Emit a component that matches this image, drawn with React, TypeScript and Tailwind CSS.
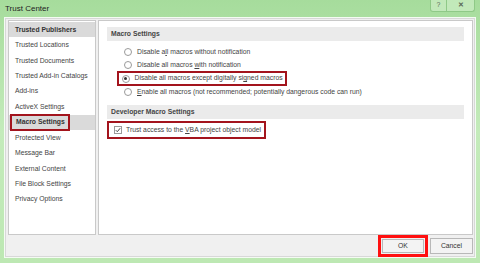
const font = { fontFamily: '"Liberation Sans", Arial, sans-serif' };

const navItems = [
  { label: 'Trusted Publishers', selected: true },
  { label: 'Trusted Locations' },
  { label: 'Trusted Documents' },
  { label: 'Trusted Add-in Catalogs' },
  { label: 'Add-ins' },
  { label: 'ActiveX Settings' },
  { label: 'Macro Settings', selected: true, marked: true },
  { label: 'Protected View' },
  { label: 'Message Bar' },
  { label: 'External Content' },
  { label: 'File Block Settings' },
  { label: 'Privacy Options' },
];

function Radio({ checked }: { checked?: boolean }) {
  return (
    <span className="w-[8px] h-[8px] rounded-full border border-[#9a9a9a] bg-white flex items-center justify-center shrink-0">
      {checked && <span className="w-[3px] h-[3px] rounded-full bg-[#333]" />}
    </span>
  );
}

function SectionHeader({ children }: { children: React.ReactNode }) {
  return (
    <div className="h-[14px] bg-[#ebebeb] flex items-center pl-[4px] font-bold text-[6.8px] text-[#444]">
      {children}
    </div>
  );
}

export default function App() {
  return (
    <div
      className="w-[480px] h-[263px] flex flex-col px-[4px] pb-[5px] bg-gradient-to-b from-[#a6dc9c] via-[#c4ebbb] to-[#bde8b3] overflow-hidden text-[#444]"
      style={font}
    >
      {/* title bar */}
      <div className="h-[17px] flex justify-between shrink-0">
        <span className="text-[8px] text-[#222] pl-[1px] pt-[3px]">Trust Center</span>
        <div className="flex h-[12px] mr-[1px] border border-t-0 border-[#8fc987] rounded-b-[3px] bg-[#cdeec6]/70">
          <span className="w-[16px] flex items-center justify-center text-[7px] text-[#5a6a58] border-r border-[#8fc987]">?</span>
          <span className="w-[27px] flex items-center justify-center text-[7px] font-bold text-[#5a6a58]">✕</span>
        </div>
      </div>

      {/* client area */}
      <div className="flex-1 flex flex-col bg-[#f0f0f0] border border-[#f4fbf3] shadow-[inset_0_0_0_1px_#d8d8d8]">
        <div className="flex gap-[2px] pt-[2px] pl-[3px] pr-[2px] h-[217px] shrink-0">
          {/* navigation */}
          <div className="w-[88px] bg-white border border-[#c9c9c9] pt-[1px] flex flex-col">
            {navItems.map((item) => (
              <div
                key={item.label}
                className={`h-[15.45px] flex items-center pl-[6px] text-[6.8px] shrink-0 ${
                  item.selected ? 'bg-[#dadada] text-[#333] font-semibold' : ''
                }`}
              >
                {item.marked ? (
                  <span className="-ml-[5px] pl-[4px] pr-[3px] h-[17px] flex items-center border-[2.5px] border-[#a3141d] font-bold">
                    {item.label}
                  </span>
                ) : (
                  item.label
                )}
              </div>
            ))}
          </div>

          {/* content */}
          <div className="flex-1 bg-white border border-[#c9c9c9] pt-[6px] px-[8px] text-[6.8px]">
            <SectionHeader>Macro Settings</SectionHeader>
            <div className="flex flex-col items-start pl-[17px] pt-[5px]">
              <div className="h-[12.5px] flex items-center gap-[5px]">
                <Radio />
                <span>
                  Disable a<span className="underline">l</span>l macros without notification
                </span>
              </div>
              <div className="h-[12.5px] flex items-center gap-[5px]">
                <Radio />
                <span>
                  Disable all macros <span className="underline">w</span>ith notification
                </span>
              </div>
              <div className="h-[15px] -ml-[7px] w-fit whitespace-nowrap flex items-center gap-[5px] pl-[2.5px] pr-[2px] border-[2.5px] border-[#a3141d]">
                <Radio checked />
                <span>Disable all macros except digitally si<span className="underline">g</span>ned macros</span>
              </div>
              <div className="h-[12px] flex items-center gap-[5px]">
                <Radio />
                <span>
                  <span className="underline">E</span>nable all macros (not recommended; potentially dangerous code can run)
                </span>
              </div>
            </div>

            <div className="mt-[7px]">
              <SectionHeader>Developer Macro Settings</SectionHeader>
            </div>
            <div className="mt-[2px] w-[159px] h-[18px] flex items-center gap-[4px] pl-[5px] border-[2.5px] border-[#a3141d]">
              <span className="w-[8px] h-[8px] border border-[#9a9a9a] bg-white flex items-center justify-center shrink-0">
                <svg width="6" height="6" viewBox="0 0 6 6">
                  <path d="M0.8 3.2 L2.3 4.7 L5.2 1.2" fill="none" stroke="#444" strokeWidth="1" />
                </svg>
              </span>
              <span>
                Trust access to the <span className="underline">V</span>BA project object model
              </span>
            </div>
          </div>
        </div>

        {/* buttons */}
        <div className="flex-1 flex justify-end items-center gap-[2px] pr-[2px]">
          <div className="border-[3px] border-[#ff1010] p-[1px]">
            <button className="w-[42px] h-[14px] bg-[#f3f3f3] border border-[#b8b8b8] text-[6.8px] text-[#333] flex items-center justify-center" style={font}>
              OK
            </button>
          </div>
          <button className="w-[43px] h-[16px] bg-[#f3f3f3] border border-[#b8b8b8] text-[6.8px] text-[#333] flex items-center justify-center" style={font}>
            Cancel
          </button>
        </div>
      </div>
    </div>
  );
}
